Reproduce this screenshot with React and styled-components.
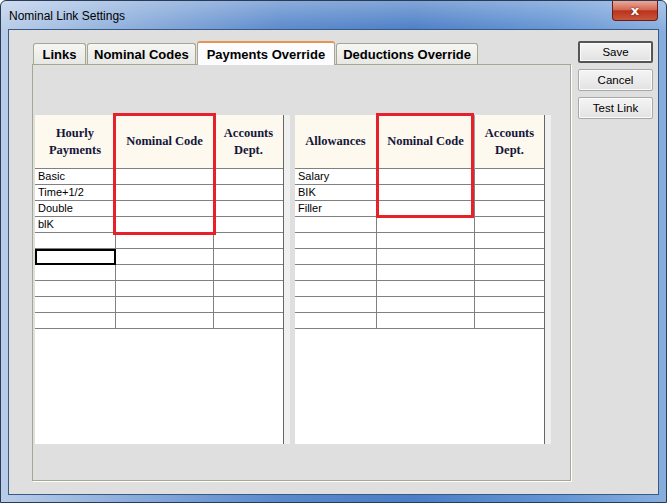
import React from 'react';
import styled, { createGlobalStyle } from 'styled-components';

const GlobalStyle = createGlobalStyle`
	html, body {
		margin: 0;
		padding: 0;
		background: #fff;
	}
	body {
		font-family: 'Liberation Sans', Arial, sans-serif;
	}
`;

const WINDOW = styled.div`
	box-sizing: border-box;
	width: 667px;
	height: 503px;
	display: flex;
	flex-direction: column;
	border: 1px solid #283c5a;
	border-radius: 6px 6px 0 0;
	padding: 0 7px 7px 7px;
	background: linear-gradient(180deg, rgba(255, 255, 255, 0.3), rgba(255, 255, 255, 0) 30px),
		linear-gradient(90deg, #b9cde8 0%, #8eafdc 18%, #5a89cc 42%, #4b7ec6 62%, #6495d4 84%, #88aedf 100%);
`;

const TITLEBAR = styled.div`
	height: 28px;
	display: flex;
	align-items: center;
	padding-left: 1px;
`;

const TITLE = styled.span`
	flex: 1;
	font-size: 12px;
	color: #000;
	padding-top: 2px;
`;

const CLOSE = styled.div`
	align-self: flex-start;
	box-sizing: border-box;
	width: 46px;
	height: 20px;
	margin-right: 1px;
	display: flex;
	align-items: center;
	justify-content: center;
	border: 1px solid #6a1d14;
	border-top: none;
	border-radius: 0 0 4px 4px;
	background: linear-gradient(180deg, #eaa899 0%, #d46a55 45%, #b9341f 52%, #c9553a 100%);
	color: #fff;
	font: bold 13px 'DejaVu Sans', sans-serif;
	text-shadow: 0 0 2px #5a120a;
`;

const CLIENT = styled.div`
	flex: 1;
	display: flex;
	gap: 7px;
	border: 1px solid #3a5a86;
	background: #dfdfdf;
	padding: 11px 5px 0 23px;
`;

const MAIN = styled.div`
	width: 539px;
	display: flex;
	flex-direction: column;
`;

const TABROW = styled.div`
	height: 23px;
	display: flex;
	align-items: flex-end;
	padding-left: 1px;
	position: relative;
	z-index: 1;
`;

const TAB = styled.div`
	box-sizing: border-box;
	min-width: 53px;
	height: ${p => (p.$active ? '24px' : '21px')};
	margin-bottom: ${p => (p.$active ? '-1px' : '0')};
	padding: 0 ${p => (p.$active ? '9px' : '6px')};
	display: flex;
	align-items: center;
	justify-content: center;
	border: 1px solid #a6a790;
	border-bottom: none;
	border-top: ${p => (p.$active ? '2px solid #e6954f' : '1px solid #a6a790')};
	border-radius: 3px 3px 0 0;
	background: ${p => (p.$active ? '#fcfcfe' : 'linear-gradient(180deg, #f6f6f4, #e7e7e3)')};
	font-size: 13px;
	font-weight: bold;
	color: #000;
	white-space: nowrap;
	margin-right: 1px;
`;

const PANEL = styled.div`
	box-sizing: border-box;
	height: 417px;
	border: 1px solid #a6a790;
	box-shadow: 1px 1px 0 #fff;
	background: #dfdfdf;
	padding: 50px 0 0 2px;
	display: flex;
	gap: 5px;
	align-items: flex-start;
`;

const GRIDBOX = styled.div`
	height: 329px;
	display: flex;
`;

const SHEET = styled.div`
	position: relative;
	display: grid;
	grid-template-columns: ${p => p.$cols};
	grid-template-rows: 54px repeat(10, 16px);
	align-content: start;
	background: #fff;
	border-right: 1px solid #666;
`;

const STRIP = styled.div`
	width: 6px;
	background: #f0f0f0;
`;

const HEAD = styled.div`
	box-sizing: border-box;
	display: flex;
	align-items: center;
	justify-content: center;
	text-align: center;
	background: #fdf9ef;
	border-bottom: 1px solid #808080;
	border-right: ${p => (p.$last ? 'none' : '1px solid #a0a0a0')};
	font: bold 12.5px/17px 'Liberation Serif', 'Times New Roman', serif;
	color: #15163a;
`;

const CELL = styled.div`
	box-sizing: border-box;
	border-bottom: 1px solid #808080;
	border-right: ${p => (p.$last ? 'none' : '1px solid #808080')};
	padding-left: 3px;
	font-size: 11px;
	line-height: 15px;
	color: #000;
	white-space: nowrap;
	overflow: hidden;
	outline: ${p => (p.$focus ? '2px solid #000' : 'none')};
	outline-offset: -2px;
`;

const HIGHLIGHT = styled.div`
	position: absolute;
	top: -2px;
	left: ${p => p.$left}px;
	width: ${p => p.$width}px;
	height: ${p => p.$height}px;
	box-sizing: border-box;
	border: 3px solid #e6212b;
	pointer-events: none;
`;

const BUTTONS = styled.div`
	display: flex;
	flex-direction: column;
	gap: 6px;
`;

const BUTTON = styled.button`
	box-sizing: border-box;
	width: 75px;
	height: 22px;
	padding: 0;
	border: ${p => (p.$default ? '2px solid #555' : '1px solid #a8a8a8')};
	border-radius: 2px;
	background: linear-gradient(180deg, #f4f4f4 0%, #ececec 50%, #e2e2e2 100%);
	box-shadow: inset 0 0 0 1px #fbfbfb;
	font: 11.5px 'Liberation Sans', Arial, sans-serif;
	color: #000;
`;

const Grid = ({ cols, headers, rows, focusRow, highlight }) => {
	const n = headers.length;
	return (
		<GRIDBOX>
			<SHEET $cols={cols}>
				{headers.map((h, i) => (
					<HEAD key={'h' + i} $last={i === n - 1}>
						<span>
							{h.split('\n').map((line, j) => (
								<React.Fragment key={j}>
									{j > 0 && <br />}
									{line}
								</React.Fragment>
							))}
						</span>
					</HEAD>
				))}
				{rows.map((r, ri) =>
					headers.map((_, ci) => (
						<CELL key={ri + '-' + ci} $last={ci === n - 1} $focus={ri === focusRow && ci === 0}>
							{ci === 0 ? r : ''}
						</CELL>
					))
				)}
				{highlight && <HIGHLIGHT $left={highlight.left} $width={highlight.width} $height={highlight.height} />}
			</SHEET>
			<STRIP />
		</GRIDBOX>
	);
};

const pad = list => [...list, ...Array(10 - list.length).fill('')];

const App = () => {
	return (
		<>
			<GlobalStyle />
			<WINDOW>
				<TITLEBAR>
					<TITLE>Nominal Link Settings</TITLE>
					<CLOSE>x</CLOSE>
				</TITLEBAR>
				<CLIENT>
					<MAIN>
						<TABROW>
							<TAB>Links</TAB>
							<TAB>Nominal Codes</TAB>
							<TAB $active>Payments Override</TAB>
							<TAB>Deductions Override</TAB>
						</TABROW>
						<PANEL>
							<Grid
								cols="81px 98px 69px"
								headers={['Hourly\nPayments', 'Nominal Code', 'Accounts\nDept.']}
								rows={pad(['Basic', 'Time+1/2', 'Double', 'blK'])}
								focusRow={5}
								highlight={{ left: 78, width: 103, height: 122 }}
							/>
							<Grid
								cols="82px 98px 69px"
								headers={['Allowances', 'Nominal Code', 'Accounts\nDept.']}
								rows={pad(['Salary', 'BIK', 'Filler'])}
								highlight={{ left: 81, width: 98, height: 105 }}
							/>
						</PANEL>
					</MAIN>
					<BUTTONS>
						<BUTTON $default>Save</BUTTON>
						<BUTTON>Cancel</BUTTON>
						<BUTTON>Test Link</BUTTON>
					</BUTTONS>
				</CLIENT>
			</WINDOW>
		</>
	);
};

export default App;
